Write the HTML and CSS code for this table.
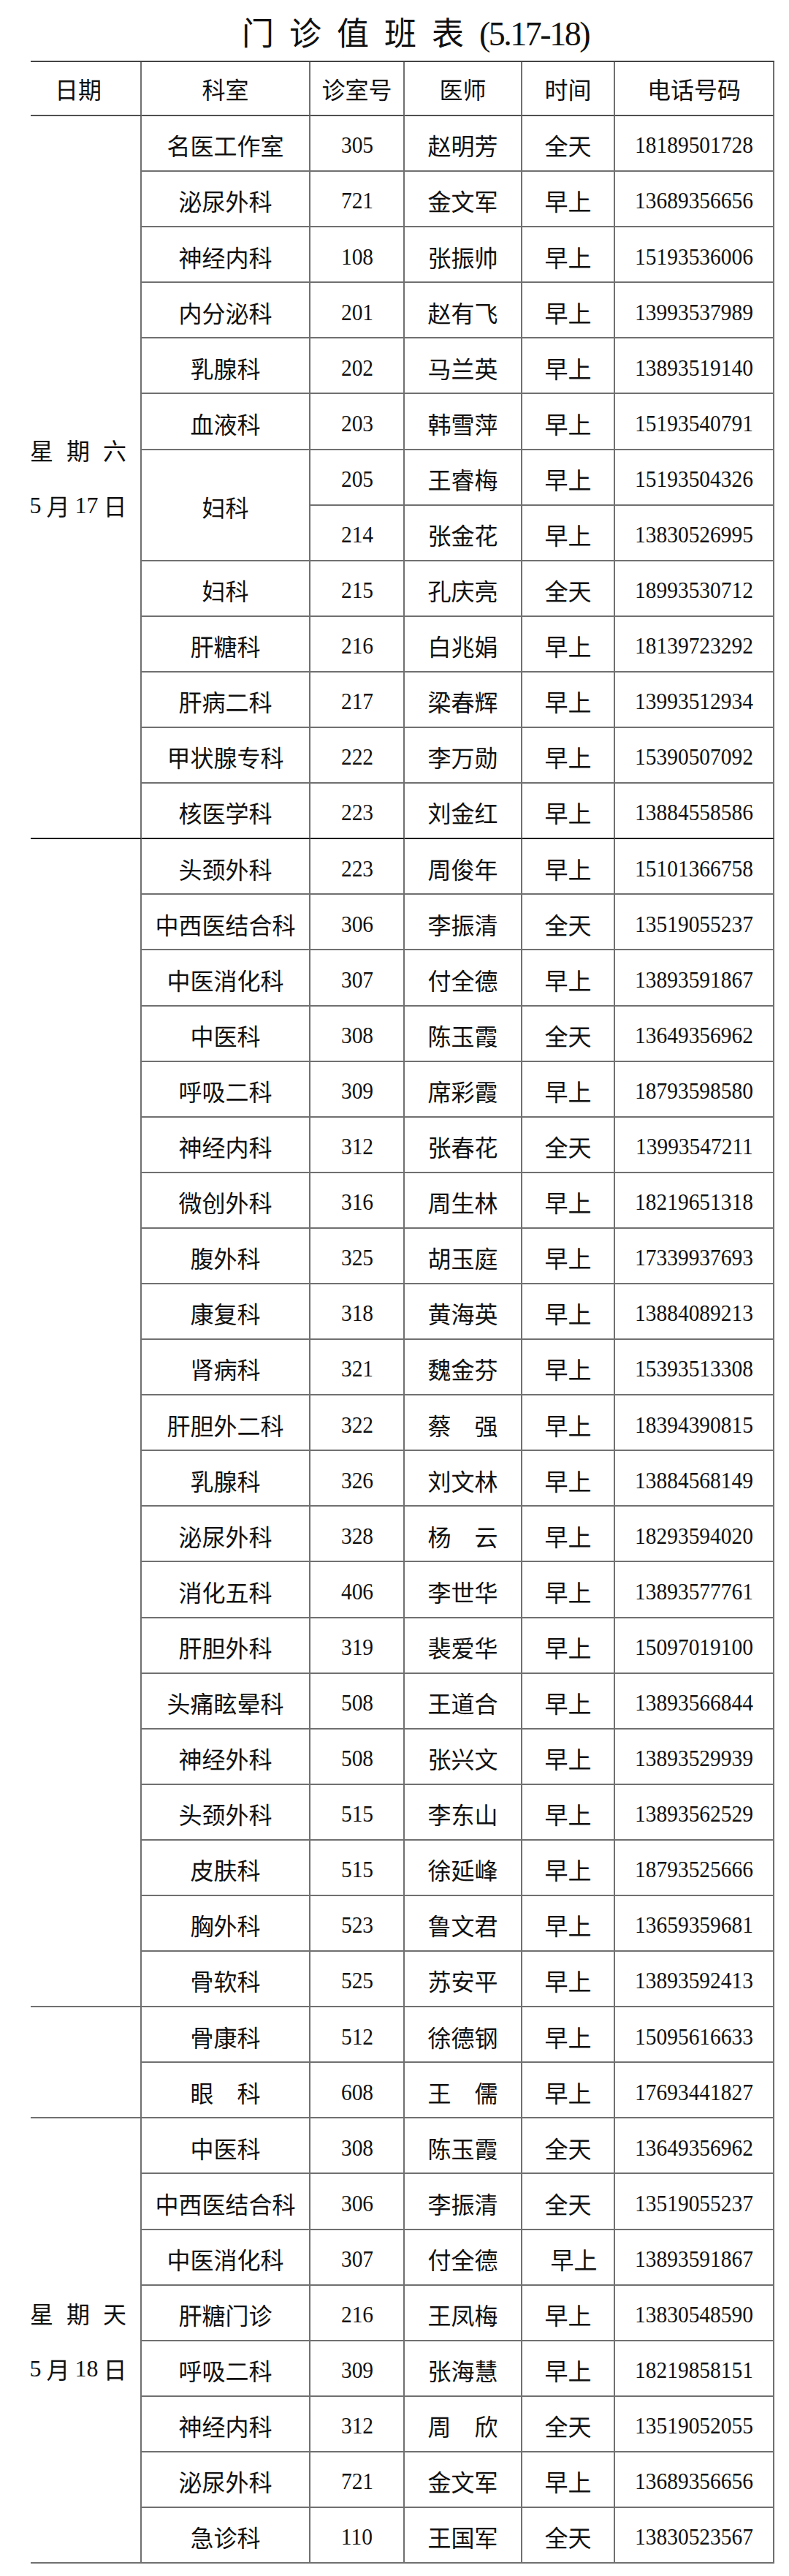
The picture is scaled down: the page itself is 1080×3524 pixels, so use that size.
FILE: index.html
```html
<!DOCTYPE html>
<html lang="zh-CN">
<head>
<meta charset="utf-8">
<title>门诊值班表</title>
<link rel="stylesheet" href="styles.css">
</head>
<body>
<h1 class="title"><span class="title-cn">门诊值班表</span><span class="title-date">(5.17-18)</span></h1>
<div class="sheet">
  <div class="c d h">日期</div><div class="c k h">科室</div><div class="c r h">诊室号</div><div class="c m h">医师</div><div class="c t h">时间</div><div class="c p h">电话号码</div>

  <div class="c d g13 x"><div class="dl"><span>星</span><span>期</span><span>六</span></div><div class="dl dn"><span class="sf">5</span><span>月</span><span class="sf">17</span><span>日</span></div></div>
  <div class="c k">名医工作室</div><div class="c r"><span class="n">305</span></div><div class="c m">赵明芳</div><div class="c t">全天</div><div class="c p"><span class="n">18189501728</span></div>
  <div class="c k">泌尿外科</div><div class="c r"><span class="n">721</span></div><div class="c m">金文军</div><div class="c t">早上</div><div class="c p"><span class="n">13689356656</span></div>
  <div class="c k">神经内科</div><div class="c r"><span class="n">108</span></div><div class="c m">张振帅</div><div class="c t">早上</div><div class="c p"><span class="n">15193536006</span></div>
  <div class="c k">内分泌科</div><div class="c r"><span class="n">201</span></div><div class="c m">赵有飞</div><div class="c t">早上</div><div class="c p"><span class="n">13993537989</span></div>
  <div class="c k">乳腺科</div><div class="c r"><span class="n">202</span></div><div class="c m">马兰英</div><div class="c t">早上</div><div class="c p"><span class="n">13893519140</span></div>
  <div class="c k">血液科</div><div class="c r"><span class="n">203</span></div><div class="c m">韩雪萍</div><div class="c t">早上</div><div class="c p"><span class="n">15193540791</span></div>
  <div class="c k g2">妇科</div><div class="c r"><span class="n">205</span></div><div class="c m">王睿梅</div><div class="c t">早上</div><div class="c p"><span class="n">15193504326</span></div>
  <div class="c r"><span class="n">214</span></div><div class="c m">张金花</div><div class="c t">早上</div><div class="c p"><span class="n">13830526995</span></div>
  <div class="c k">妇科</div><div class="c r"><span class="n">215</span></div><div class="c m">孔庆亮</div><div class="c t">全天</div><div class="c p"><span class="n">18993530712</span></div>
  <div class="c k">肝糖科</div><div class="c r"><span class="n">216</span></div><div class="c m">白兆娟</div><div class="c t">早上</div><div class="c p"><span class="n">18139723292</span></div>
  <div class="c k">肝病二科</div><div class="c r"><span class="n">217</span></div><div class="c m">梁春辉</div><div class="c t">早上</div><div class="c p"><span class="n">13993512934</span></div>
  <div class="c k">甲状腺专科</div><div class="c r"><span class="n">222</span></div><div class="c m">李万勋</div><div class="c t">早上</div><div class="c p"><span class="n">15390507092</span></div>
  <div class="c k x">核医学科</div><div class="c r x"><span class="n">223</span></div><div class="c m x">刘金红</div><div class="c t x">早上</div><div class="c p x"><span class="n">13884558586</span></div>

  <div class="c d g21"></div>
  <div class="c k">头颈外科</div><div class="c r"><span class="n">223</span></div><div class="c m">周俊年</div><div class="c t">早上</div><div class="c p"><span class="n">15101366758</span></div>
  <div class="c k">中西医结合科</div><div class="c r"><span class="n">306</span></div><div class="c m">李振清</div><div class="c t">全天</div><div class="c p"><span class="n">13519055237</span></div>
  <div class="c k">中医消化科</div><div class="c r"><span class="n">307</span></div><div class="c m">付全德</div><div class="c t">早上</div><div class="c p"><span class="n">13893591867</span></div>
  <div class="c k">中医科</div><div class="c r"><span class="n">308</span></div><div class="c m">陈玉霞</div><div class="c t">全天</div><div class="c p"><span class="n">13649356962</span></div>
  <div class="c k">呼吸二科</div><div class="c r"><span class="n">309</span></div><div class="c m">席彩霞</div><div class="c t">早上</div><div class="c p"><span class="n">18793598580</span></div>
  <div class="c k">神经内科</div><div class="c r"><span class="n">312</span></div><div class="c m">张春花</div><div class="c t">全天</div><div class="c p"><span class="n">13993547211</span></div>
  <div class="c k">微创外科</div><div class="c r"><span class="n">316</span></div><div class="c m">周生林</div><div class="c t">早上</div><div class="c p"><span class="n">18219651318</span></div>
  <div class="c k">腹外科</div><div class="c r"><span class="n">325</span></div><div class="c m">胡玉庭</div><div class="c t">早上</div><div class="c p"><span class="n">17339937693</span></div>
  <div class="c k">康复科</div><div class="c r"><span class="n">318</span></div><div class="c m">黄海英</div><div class="c t">早上</div><div class="c p"><span class="n">13884089213</span></div>
  <div class="c k">肾病科</div><div class="c r"><span class="n">321</span></div><div class="c m">魏金芬</div><div class="c t">早上</div><div class="c p"><span class="n">15393513308</span></div>
  <div class="c k">肝胆外二科</div><div class="c r"><span class="n">322</span></div><div class="c m">蔡　强</div><div class="c t">早上</div><div class="c p"><span class="n">18394390815</span></div>
  <div class="c k">乳腺科</div><div class="c r"><span class="n">326</span></div><div class="c m">刘文林</div><div class="c t">早上</div><div class="c p"><span class="n">13884568149</span></div>
  <div class="c k">泌尿外科</div><div class="c r"><span class="n">328</span></div><div class="c m">杨　云</div><div class="c t">早上</div><div class="c p"><span class="n">18293594020</span></div>
  <div class="c k">消化五科</div><div class="c r"><span class="n">406</span></div><div class="c m">李世华</div><div class="c t">早上</div><div class="c p"><span class="n">13893577761</span></div>
  <div class="c k">肝胆外科</div><div class="c r"><span class="n">319</span></div><div class="c m">裴爱华</div><div class="c t">早上</div><div class="c p"><span class="n">15097019100</span></div>
  <div class="c k">头痛眩晕科</div><div class="c r"><span class="n">508</span></div><div class="c m">王道合</div><div class="c t">早上</div><div class="c p"><span class="n">13893566844</span></div>
  <div class="c k">神经外科</div><div class="c r"><span class="n">508</span></div><div class="c m">张兴文</div><div class="c t">早上</div><div class="c p"><span class="n">13893529939</span></div>
  <div class="c k">头颈外科</div><div class="c r"><span class="n">515</span></div><div class="c m">李东山</div><div class="c t">早上</div><div class="c p"><span class="n">13893562529</span></div>
  <div class="c k">皮肤科</div><div class="c r"><span class="n">515</span></div><div class="c m">徐延峰</div><div class="c t">早上</div><div class="c p"><span class="n">18793525666</span></div>
  <div class="c k">胸外科</div><div class="c r"><span class="n">523</span></div><div class="c m">鲁文君</div><div class="c t">早上</div><div class="c p"><span class="n">13659359681</span></div>
  <div class="c k">骨软科</div><div class="c r"><span class="n">525</span></div><div class="c m">苏安平</div><div class="c t">早上</div><div class="c p"><span class="n">13893592413</span></div>

  <div class="c d g2"></div>
  <div class="c k">骨康科</div><div class="c r"><span class="n">512</span></div><div class="c m">徐德钢</div><div class="c t">早上</div><div class="c p"><span class="n">15095616633</span></div>
  <div class="c k">眼　科</div><div class="c r"><span class="n">608</span></div><div class="c m">王　儒</div><div class="c t">早上</div><div class="c p"><span class="n">17693441827</span></div>

  <div class="c d g8"><div class="dl"><span>星</span><span>期</span><span>天</span></div><div class="dl dn"><span class="sf">5</span><span>月</span><span class="sf">18</span><span>日</span></div></div>
  <div class="c k">中医科</div><div class="c r"><span class="n">308</span></div><div class="c m">陈玉霞</div><div class="c t">全天</div><div class="c p"><span class="n">13649356962</span></div>
  <div class="c k">中西医结合科</div><div class="c r"><span class="n">306</span></div><div class="c m">李振清</div><div class="c t">全天</div><div class="c p"><span class="n">13519055237</span></div>
  <div class="c k">中医消化科</div><div class="c r"><span class="n">307</span></div><div class="c m">付全德</div><div class="c t shift">早上</div><div class="c p"><span class="n">13893591867</span></div>
  <div class="c k">肝糖门诊</div><div class="c r"><span class="n">216</span></div><div class="c m">王凤梅</div><div class="c t">早上</div><div class="c p"><span class="n">13830548590</span></div>
  <div class="c k">呼吸二科</div><div class="c r"><span class="n">309</span></div><div class="c m">张海慧</div><div class="c t">早上</div><div class="c p"><span class="n">18219858151</span></div>
  <div class="c k">神经内科</div><div class="c r"><span class="n">312</span></div><div class="c m">周　欣</div><div class="c t">全天</div><div class="c p"><span class="n">13519052055</span></div>
  <div class="c k">泌尿外科</div><div class="c r"><span class="n">721</span></div><div class="c m">金文军</div><div class="c t">早上</div><div class="c p"><span class="n">13689356656</span></div>
  <div class="c k">急诊科</div><div class="c r"><span class="n">110</span></div><div class="c m">王国军</div><div class="c t">全天</div><div class="c p"><span class="n">13830523567</span></div>
</div>
</body>
</html>
```

FILE: styles.css
```css
body {
  margin: 0;
  background: #fff;
  color: #111;
  font-family: "Noto Sans CJK SC", sans-serif;
}

.title {
  margin: 0;
  height: 83px;
  box-sizing: border-box;
  padding: 4px 0 0 57px;
  line-height: 79px;
  text-align: center;
  font-size: 44px;
  font-weight: 400;
  white-space: nowrap;
}

.title-cn {
  letter-spacing: 21px;
}

.title-date {
  font-family: "Liberation Serif", serif;
  font-size: 46px;
  letter-spacing: -2.5px;
}

.sheet {
  display: grid;
  grid-template-columns: 152px 231px 129px 161px 127px 218px;
  grid-template-rows: 74px;
  grid-auto-rows: 76.1px;
  width: 1018px;
  margin-left: 42px;
  border-top: 2px solid #444;
}

.c {
  box-sizing: border-box;
  display: flex;
  align-items: center;
  justify-content: center;
  padding-top: 5px;
  border-right: 2px solid #707070;
  border-bottom: 2px solid #707070;
  font-size: 32px;
  line-height: 1.2;
  white-space: nowrap;
}

.h {
  padding-top: 0;
  border-bottom-color: #505050;
}

.d {
  grid-column: 1;
  flex-direction: column;
  padding: 0 20px 0 0;
}

.k { grid-column: 2; }
.r { grid-column: 3; }
.m { grid-column: 4; }
.t { grid-column: 5; }
.p { grid-column: 6; }

.x {
  border-bottom-color: #1a1a1a;
}

.g2 { grid-row: span 2; }
.g8 { grid-row: span 8; }
.g13 { grid-row: span 13; }
.g21 { grid-row: span 21; }

.dl {
  display: flex;
  align-items: center;
  justify-content: center;
  gap: 18px;
  height: 76px;
  line-height: 1;
}

.dn {
  gap: 7px;
}

.sf {
  font-family: "Liberation Serif", serif;
}

.n {
  display: inline-block;
  font-family: "Liberation Serif", serif;
  transform: scaleX(0.92);
}

.shift {
  padding-left: 16px;
}
```
